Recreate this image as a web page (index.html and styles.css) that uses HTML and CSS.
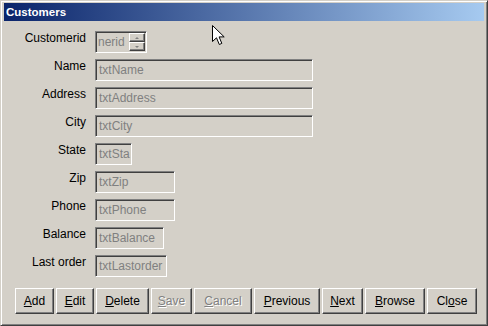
FILE: index.html
```html
<!doctype html>
<html lang="en">
	<head>
		<meta charset="UTF-8">
		<title>Customers</title>
		<link rel="stylesheet" href="styles.css">
	</head>
	<body>

		<div id="janela" class="janela">
			<div class="titulo">Customers</div>

			<div class="form">
				<label class="rotulo">Customerid</label>
				<div id="txtCustomerid" class="campo spin">
					<span class="valor">nerid</span>
					<div class="setas">
						<div class="seta"><span class="up"></span></div>
						<div class="seta"><span class="down"></span></div>
					</div>
				</div>

				<label class="rotulo">Name</label>
				<div id="txtName" class="campo largo">txtName</div>

				<label class="rotulo">Address</label>
				<div id="txtAddress" class="campo largo">txtAddress</div>

				<label class="rotulo">City</label>
				<div id="txtCity" class="campo largo">txtCity</div>

				<label class="rotulo">State</label>
				<div id="txtState" class="campo">txtSta</div>

				<label class="rotulo">Zip</label>
				<div id="txtZip" class="campo">txtZip</div>

				<label class="rotulo">Phone</label>
				<div id="txtPhone" class="campo">txtPhone</div>

				<label class="rotulo">Balance</label>
				<div id="txtBalance" class="campo">txtBalance</div>

				<label class="rotulo">Last order</label>
				<div id="txtLastorder" class="campo">txtLastorder</div>
			</div>

			<div class="botoes">
				<button id="btnAdd"><u>A</u>dd</button>
				<button id="btnEdit"><u>E</u>dit</button>
				<button id="btnDelete"><u>D</u>elete</button>
				<button id="btnSave" class="desab"><u>S</u>ave</button>
				<button id="btnCancel" class="desab"><u>C</u>ancel</button>
				<button id="btnPrevious"><u>P</u>revious</button>
				<button id="btnNext"><u>N</u>ext</button>
				<button id="btnBrowse"><u>B</u>rowse</button>
				<button id="btnClose">Cl<u>o</u>se</button>
			</div>

			<!-- ponteiro do mouse -->
			<svg class="cursor" width="14" height="22" viewBox="0 0 14 22">
				<path d="M0.5 0.5 L0.5 16.5 L4.5 12.8 L7.3 19.5 L9.8 18.4 L7.1 11.9 L12.2 11.9 Z" fill="#fff" stroke="#000" stroke-width="1" stroke-linejoin="miter"/>
			</svg>
		</div>

	</body>
</html>
```

FILE: styles.css
```css
body{
	margin: 0;
	font-family: 'Liberation Sans', Arial, sans-serif;
	font-size: 12px;
}

.janela{
	position: relative;
	width: 488px;
	height: 326px;
	box-sizing: border-box;
	background: #d4d0c8;
	border: 1px solid;
	border-color: #d4d0c8 #404040 #404040 #d4d0c8;
	box-shadow: inset 1px 1px #fff, inset -1px -1px #808080;
	padding: 2px 3px 2px 3px;
}

.titulo{
	height: 18px;
	line-height: 18px;
	padding-left: 2px;
	color: #fff;
	font-weight: bold;
	font-size: 11.5px;
	background: linear-gradient(to right, #0a246a, #a6caf0);
}

.form{
	display: grid;
	grid-template-columns: 82px auto;
	grid-auto-rows: 22px;
	column-gap: 9px;
	row-gap: 6px;
	margin-top: 10px;
	justify-items: start;
}

.rotulo{
	justify-self: end;
	line-height: 15px;
	color: #000;
}

.campo{
	box-sizing: border-box;
	height: 22px;
	border: 1px solid;
	border-color: #808080 #fff #fff #808080;
	box-shadow: inset 1px 1px #404040;
	padding: 1px 0 0 3px;
	line-height: 18px;
	color: #808080;
	white-space: nowrap;
	overflow: hidden;
}

.largo{
	width: 218px;
}

#txtState{ width: 37px; }
#txtZip{ width: 80px; }
#txtPhone{ width: 80px; }
#txtBalance{ width: 69px; }
#txtLastorder{ width: 72px; }

.spin{
	width: 52px;
	display: flex;
	padding: 1px 1px 1px 2px;
}

.spin .valor{
	flex: 1;
	line-height: 18px;
}

.setas{
	display: flex;
	flex-direction: column;
	width: 16px;
}

.seta{
	flex: 1;
	box-sizing: border-box;
	border: 1px solid;
	border-color: #fff #404040 #404040 #fff;
	box-shadow: inset -1px -1px #808080;
	display: flex;
	align-items: center;
	justify-content: center;
}

.up{
	width: 0;
	height: 0;
	border-left: 2px solid transparent;
	border-right: 2px solid transparent;
	border-bottom: 2px solid #808080;
}

.down{
	width: 0;
	height: 0;
	border-left: 2px solid transparent;
	border-right: 2px solid transparent;
	border-top: 2px solid #808080;
}

.botoes{
	display: flex;
	gap: 2px;
	margin-top: 11px;
	padding-left: 11px;
}

.botoes button{
	box-sizing: border-box;
	height: 26px;
	padding: 0;
	font-family: 'Liberation Sans', Arial, sans-serif;
	font-size: 12px;
	color: #000;
	background: #d4d0c8;
	border: 1px solid;
	border-color: #fff #404040 #404040 #fff;
	box-shadow: inset -1px -1px #808080;
}

.botoes button.desab{
	color: #808080;
	text-shadow: 1px 1px #fff;
}

#btnAdd{ width: 39px; }
#btnEdit{ width: 38px; }
#btnDelete{ width: 53px; }
#btnSave{ width: 41px; }
#btnCancel{ width: 58px; }
#btnPrevious{ width: 66px; }
#btnNext{ width: 41px; }
#btnBrowse{ width: 60px; }
#btnClose{ width: 50px; }

.cursor{
	position: absolute;
	left: 211px;
	top: 24px;
}
```
